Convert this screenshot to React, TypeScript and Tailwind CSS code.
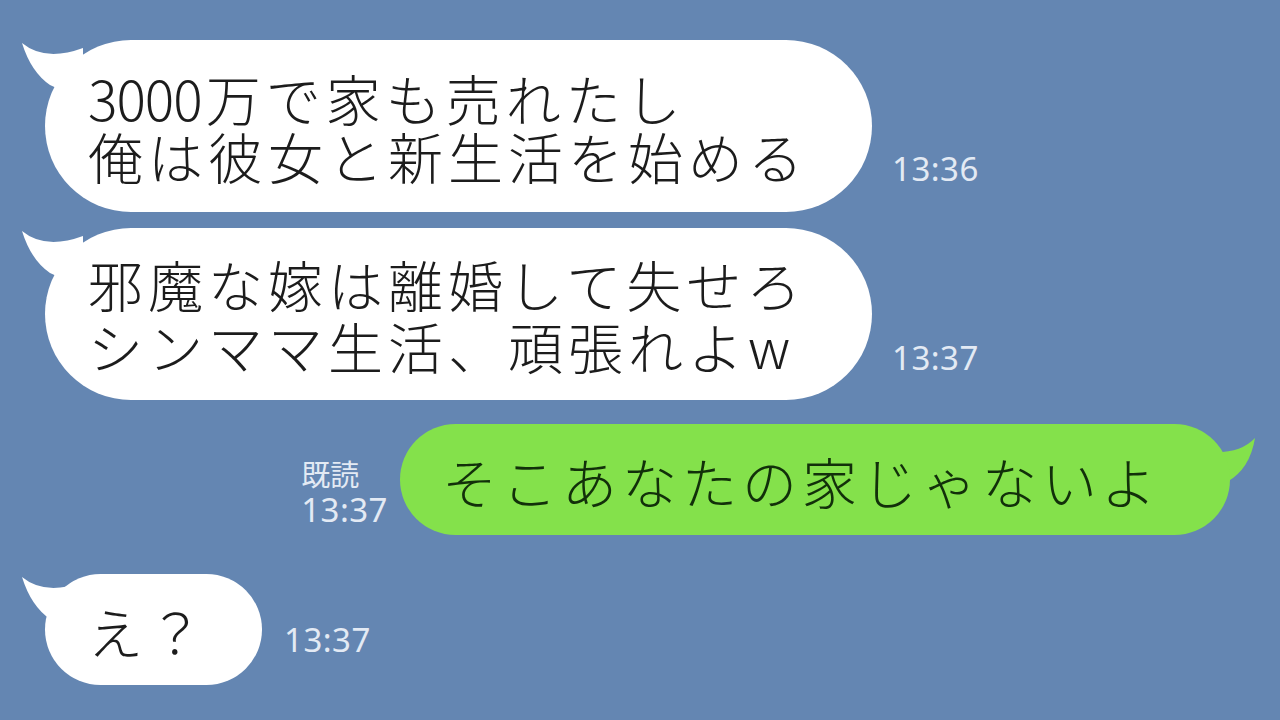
const jp = { fontFamily: '"Noto Sans CJK JP", "Noto Sans", sans-serif' }
const num = { fontFamily: '"Noto Sans", "Liberation Sans", sans-serif' }

function LeftTail() {
  return (
    <svg
      className="absolute left-[-30px] top-0"
      width="80"
      height="70"
      viewBox="-30 0 80 70"
    >
      <path d="M -23 3 Q 0 22 38 8 L 38 60 L 5 45 Q -14 32 -23 3 Z" fill="#ffffff" />
    </svg>
  )
}

function RightTail() {
  return (
    <svg
      className="absolute right-[-30px] top-0"
      width="80"
      height="70"
      viewBox="-50 0 80 70"
    >
      <path d="M 25 14 Q 10 30 -20 28 L -20 62 L -3 58 Q 20 45 25 14 Z" fill="#84e14b" />
    </svg>
  )
}

function Time({ children }: { children: React.ReactNode }) {
  return (
    <div style={num} className="text-[33px] leading-[38px] text-[#e3eaf4] tracking-[0.5px]">
      {children}
    </div>
  )
}

export default function App() {
  return (
    <main className="w-[1280px] h-[720px] overflow-hidden bg-[#6486b2] flex flex-col pt-[40px]">
      {/* incoming 1 */}
      <div className="flex items-end ml-[45px] gap-[20px]">
        <div className="relative">
          <LeftTail />
          <div
            style={jp}
            className="relative w-[827px] h-[172px] rounded-full bg-white flex flex-col justify-center pl-[43px] text-[55px] font-light leading-[58px] tracking-[5px] text-[#1c1c1c]"
          >
            <div>
              <span className="tracking-[-1px]">3000</span>
              <span className="ml-[4px]">万で家も売れたし</span>
            </div>
            <div>俺は彼女と新生活を始める</div>
          </div>
        </div>
        <div className="mb-[24px]">
          <Time>13:36</Time>
        </div>
      </div>

      {/* incoming 2 */}
      <div className="flex items-end ml-[45px] gap-[20px] mt-[16px]">
        <div className="relative">
          <LeftTail />
          <div
            style={jp}
            className="relative w-[827px] h-[172px] rounded-full bg-white flex flex-col justify-center pl-[43px] text-[55px] font-light leading-[62px] tracking-[5px] text-[#1c1c1c]"
          >
            <div>邪魔な嫁は離婚して失せろ</div>
            <div>シンママ生活、頑張れよw</div>
          </div>
        </div>
        <div className="mb-[23px]">
          <Time>13:37</Time>
        </div>
      </div>

      {/* outgoing */}
      <div className="flex items-end justify-end mr-[50px] gap-[12px] mt-[24px]">
        <div className="mb-[6px] flex flex-col">
          <div style={jp} className="text-[29px] leading-[36px] text-[#e3eaf4]">既読</div>
          <Time>13:37</Time>
        </div>
        <div className="relative">
          <RightTail />
          <div
            style={jp}
            className="relative w-[830px] h-[111px] rounded-full bg-[#84e14b] flex items-center pl-[42px] text-[55px] font-light leading-[60px] tracking-[5px] text-[#12300a]"
          >
            そこあなたの家じゃないよ
          </div>
        </div>
      </div>

      {/* incoming 3 */}
      <div className="flex items-end ml-[45px] gap-[22px] mt-[39px]">
        <div className="relative">
          <LeftTail />
          <div
            style={jp}
            className="relative w-[217px] h-[111px] rounded-full bg-white flex items-center pl-[43px] text-[55px] font-light leading-[60px] tracking-[5px] text-[#1c1c1c]"
          >
            え？
          </div>
        </div>
        <div className="mb-[26px]">
          <Time>13:37</Time>
        </div>
      </div>
    </main>
  )
}
